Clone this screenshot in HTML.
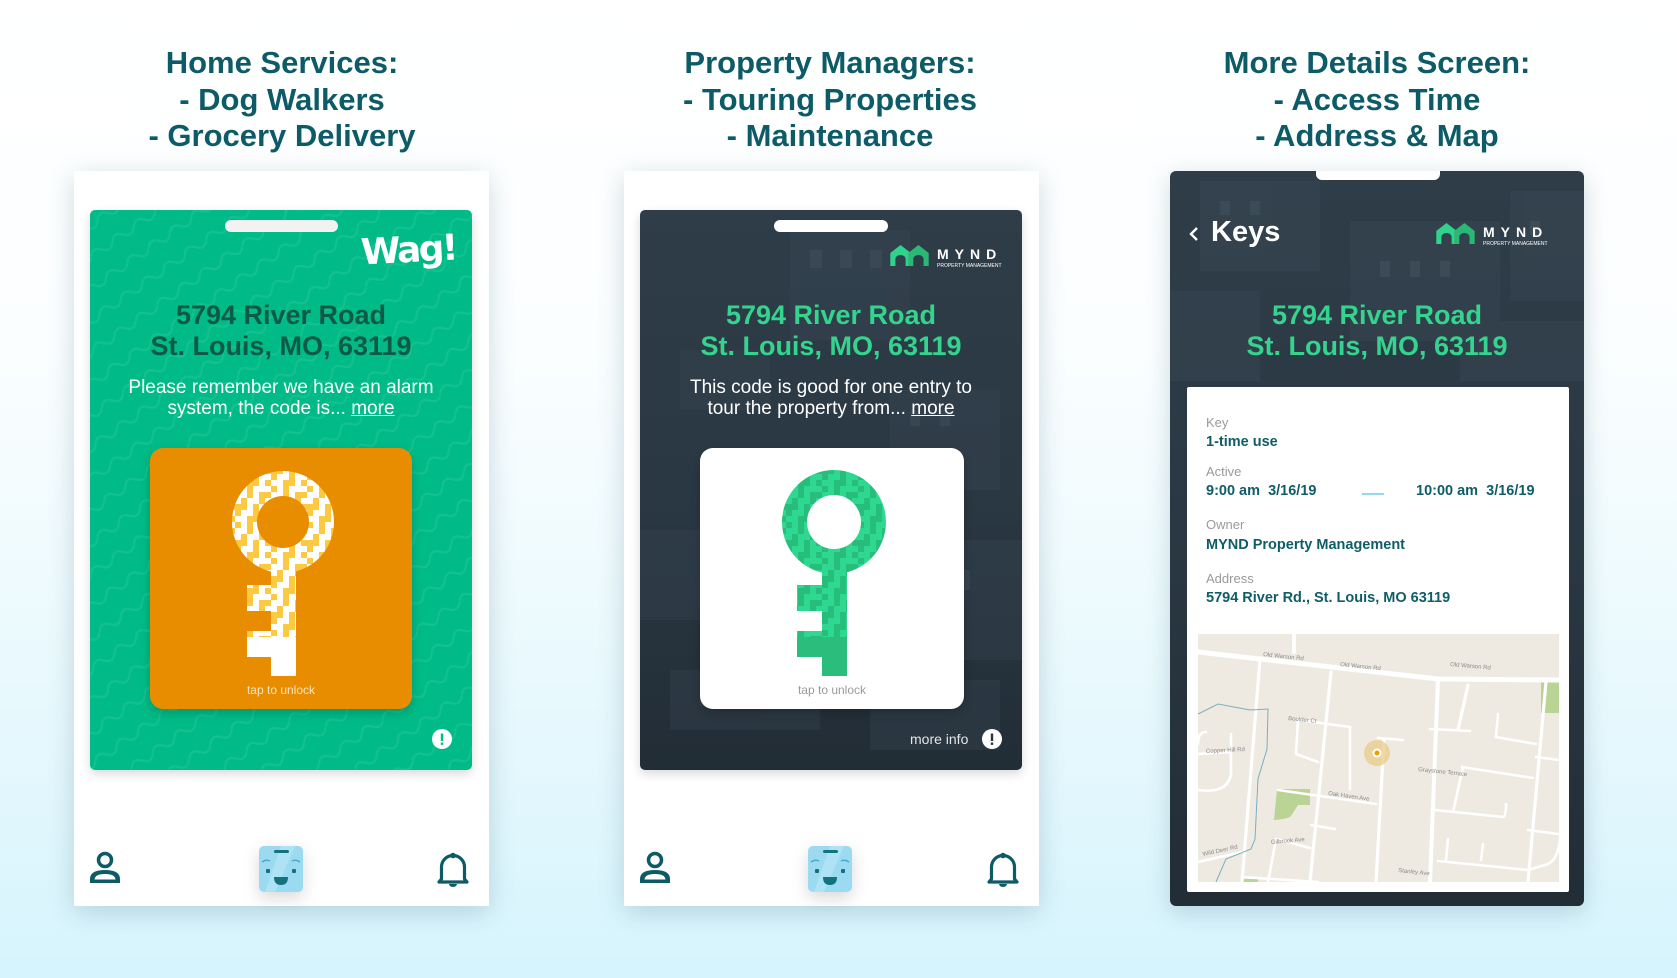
<!DOCTYPE html>
<html><head><meta charset="utf-8">
<style>
*{margin:0;padding:0;box-sizing:border-box}
body{width:1677px;height:978px;overflow:hidden;position:relative;font-family:"Liberation Sans",sans-serif;background:linear-gradient(#ffffff 0%,#fbfeff 35%,#e6f8fd 75%,#d6f4fd 100%)}
.abs{position:absolute}
.title{position:absolute;width:500px;text-align:center;color:#0d5b67;font-weight:bold;font-size:31px;line-height:36.5px;top:45px}
.phone{position:absolute;top:171px;width:415px;height:735px;background:#fff;box-shadow:0 6px 24px rgba(40,90,110,.22)}
.addr{position:absolute;width:382px;text-align:center;font-weight:bold;font-size:27px;line-height:31px;top:300px}
.body{position:absolute;width:382px;text-align:center;color:#fff;font-size:19px;line-height:21px;top:377px}
.body u{text-decoration:underline}
.pill{position:absolute;height:12px;border-radius:6px;background:#f2f2f2}
.tap{position:absolute;width:100%;text-align:center;font-size:12px;bottom:12px}
.lbl{position:absolute;left:1206px;font-size:13px;color:#9a9a9a}
.val{position:absolute;font-size:14.5px;font-weight:bold;color:#0f5d68}
</style></head><body>

<div class="title" style="left:32px">Home Services:<br>- Dog Walkers<br>- Grocery Delivery</div>
<div class="title" style="left:580px">Property Managers:<br>- Touring Properties<br>- Maintenance</div>
<div class="title" style="left:1127px">More Details Screen:<br>- Access Time<br>- Address &amp; Map</div>

<svg width="0" height="0" style="position:absolute">
<defs>
<pattern id="wave" width="26" height="26" patternUnits="userSpaceOnUse" patternTransform="rotate(-35)">
<path d="M0 13 Q6.5 5 13 13 T26 13" fill="none" stroke="rgba(255,255,255,0.08)" stroke-width="2.2"/>
</pattern>
<pattern id="qrY" width="36" height="36" patternUnits="userSpaceOnUse">
<rect width="36" height="36" fill="#ffffff"/>
<g fill="#fdc940"><rect x="0" y="0" width="6" height="12"/><rect x="12" y="6" width="12" height="6"/><rect x="24" y="0" width="6" height="6"/><rect x="6" y="18" width="6" height="12"/><rect x="18" y="18" width="12" height="6"/><rect x="30" y="12" width="6" height="12"/><rect x="0" y="30" width="12" height="6"/><rect x="18" y="30" width="6" height="6"/><rect x="24" y="24" width="6" height="6"/><rect x="12" y="12" width="6" height="6"/></g>
</pattern>
<pattern id="qrG" width="36" height="36" patternUnits="userSpaceOnUse">
<rect width="36" height="36" fill="#2fd891"/>
<g fill="#27bd7b"><rect x="0" y="0" width="6" height="12"/><rect x="12" y="6" width="12" height="6"/><rect x="24" y="0" width="6" height="6"/><rect x="6" y="18" width="6" height="12"/><rect x="18" y="18" width="12" height="6"/><rect x="30" y="12" width="6" height="12"/><rect x="0" y="30" width="12" height="6"/><rect x="18" y="30" width="6" height="6"/><rect x="24" y="24" width="6" height="6"/><rect x="12" y="12" width="6" height="6"/></g>
</pattern>
<linearGradient id="dark" x1="0" y1="0" x2="0" y2="1"><stop offset="0" stop-color="#2f3d49"/><stop offset="0.5" stop-color="#2a3843"/><stop offset="1" stop-color="#222d36"/></linearGradient>
</defs>
</svg>

<!-- PHONE 1 -->
<div class="phone" style="left:74px"></div>
<div class="abs" style="left:90px;top:210px;width:382px;height:560px;border-radius:5px;background:#00bb87;overflow:hidden;box-shadow:0 4px 10px rgba(0,0,0,.15)">
<svg width="382" height="560" style="position:absolute;left:0;top:0"><rect width="382" height="560" fill="url(#wave)"/></svg>
</div>
<div class="pill" style="left:225px;top:220px;width:113px"></div>
<div class="abs" style="left:361px;top:230px;font-size:36px;font-weight:900;color:#fff;font-family:'DejaVu Sans','Liberation Sans',sans-serif;letter-spacing:-2.5px;transform:rotate(-3deg)">Wag!</div>
<div class="addr" style="left:90px;color:#0c5a47">5794 River Road<br>St. Louis, MO, 63119</div>
<div class="body" style="left:90px">Please remember we have an alarm<br>system, the code is... <u>more</u></div>
<div class="abs" style="left:150px;top:448px;width:262px;height:261px;border-radius:13px;background:#e88d00;box-shadow:0 4px 10px rgba(0,0,0,.2)">
<div class="tap" style="color:#fbe3c0">tap to unlock</div></div>
<svg class="abs" style="left:150px;top:448px" width="262" height="261">
<g transform="translate(133,74)">
<clipPath id="k1"><circle cx="0" cy="0" r="51"/><rect x="-12" y="30" width="25" height="124"/><rect x="-36" y="63" width="25" height="26"/><rect x="-36" y="109" width="25" height="26"/></clipPath>
<rect x="-60" y="-60" width="120" height="220" fill="url(#qrY)" clip-path="url(#k1)"/>
<rect x="-36" y="115" width="49" height="20" fill="#fff"/><rect x="-12" y="135" width="25" height="19" fill="#fff"/>
<circle cx="0" cy="0" r="26" fill="#e88d00"/>
</g></svg>
<svg class="abs" style="left:432px;top:729px" width="20" height="20"><circle cx="10" cy="10" r="10" fill="#fff"/><rect x="8.8" y="4.5" width="2.4" height="7.5" fill="#00bb87"/><rect x="8.8" y="13.5" width="2.4" height="2.4" fill="#00bb87"/></svg>

<!-- PHONE 2 -->
<div class="phone" style="left:624px"></div>
<div class="abs" style="left:640px;top:210px;width:382px;height:560px;border-radius:5px;overflow:hidden;box-shadow:0 4px 10px rgba(0,0,0,.15)">
<svg width="382" height="560" style="position:absolute;left:0;top:0">
<rect width="382" height="560" fill="url(#dark)"/>
<g fill="#3a4a57" opacity="0.3">
<rect x="150" y="20" width="120" height="110"/><rect x="40" y="140" width="90" height="60"/><rect x="250" y="180" width="110" height="100"/><rect x="0" y="320" width="80" height="90"/><rect x="300" y="330" width="82" height="120"/><rect x="30" y="460" width="150" height="60"/><rect x="230" y="470" width="130" height="70"/>
</g>
<g fill="#4d5d69" opacity="0.3"><rect x="170" y="40" width="12" height="18"/><rect x="200" y="40" width="12" height="18"/><rect x="230" y="40" width="12" height="18"/><rect x="270" y="200" width="10" height="16"/><rect x="300" y="200" width="10" height="16"/><rect x="320" y="360" width="10" height="20"/><rect x="60" y="480" width="10" height="16"/><rect x="90" y="480" width="10" height="16"/></g>
</svg>
</div>
<div class="pill" style="left:774px;top:220px;width:114px;background:#fff"></div>
<svg class="abs" style="left:889px;top:244px" width="120" height="28">
<g transform="scale(1.28,1)">
<path d="M1 22 V9 L9 1 L17 9 V22 H13 V15 A4 4 0 0 0 5 15 V22 Z" fill="#31d38c"/>
<path d="M15 22 V9 L23 1 L31 9 V22 H27 V15 A4 4 0 0 0 19 15 V22 Z" fill="#2bb877"/></g>
<text x="48" y="15" font-size="14" font-weight="bold" fill="#fff" letter-spacing="6" font-family="Liberation Sans">MYND</text>
<text x="48" y="23" font-size="5" fill="#fff" font-family="Liberation Sans">PROPERTY MANAGEMENT</text>
</svg>
<div class="addr" style="left:640px;color:#34d48e">5794 River Road<br>St. Louis, MO, 63119</div>
<div class="body" style="left:640px">This code is good for one entry to<br>tour the property from... <u>more</u></div>
<div class="abs" style="left:700px;top:448px;width:264px;height:261px;border-radius:13px;background:#fff;box-shadow:0 4px 10px rgba(0,0,0,.2)">
<div class="tap" style="color:#9a9a9a">tap to unlock</div></div>
<svg class="abs" style="left:700px;top:448px" width="264" height="261">
<g transform="translate(134,74)">
<clipPath id="k2"><circle cx="0" cy="0" r="52"/><rect x="-12" y="30" width="25" height="124"/><rect x="-37" y="63" width="25" height="26"/><rect x="-37" y="109" width="25" height="26"/></clipPath>
<rect x="-60" y="-60" width="120" height="220" fill="url(#qrG)" clip-path="url(#k2)"/>
<rect x="-37" y="115" width="50" height="20" fill="#2bbd7b"/><rect x="-12" y="135" width="25" height="19" fill="#2bbd7b"/>
<circle cx="0" cy="0" r="27" fill="#fff"/>
</g></svg>
<div class="abs" style="left:910px;top:731px;font-size:14px;color:#e6e6e6">more info</div>
<svg class="abs" style="left:982px;top:729px" width="20" height="20"><circle cx="10" cy="10" r="10" fill="#fff"/><rect x="8.8" y="4.5" width="2.4" height="7.5" fill="#27343f"/><rect x="8.8" y="13.5" width="2.4" height="2.4" fill="#27343f"/></svg>

<!-- nav icons -->
<svg class="abs" style="left:88px;top:851px" width="36" height="34"><circle cx="17" cy="9" r="6.5" fill="none" stroke="#0d5b67" stroke-width="3.5"/><path d="M2 32 V28 Q2 19 17 19 Q32 19 32 28 V32 Z M6.5 28.5 H27.5 Q27 23 17 23 Q7 23 6.5 28.5Z" fill="#0d5b67" fill-rule="evenodd"/></svg>
<svg class="abs" style="left:638px;top:851px" width="36" height="34"><circle cx="17" cy="9" r="6.5" fill="none" stroke="#0d5b67" stroke-width="3.5"/><path d="M2 32 V28 Q2 19 17 19 Q32 19 32 28 V32 Z M6.5 28.5 H27.5 Q27 23 17 23 Q7 23 6.5 28.5Z" fill="#0d5b67" fill-rule="evenodd"/></svg>
<svg class="abs" style="left:436px;top:852px" width="34" height="36"><circle cx="17" cy="3.5" r="2.8" fill="#0d5b67"/><path d="M5.5 27 V15 A11.5 11.5 0 0 1 28.5 15 V27 L31 30 H3 Z" fill="none" stroke="#0d5b67" stroke-width="3.2" stroke-linejoin="round"/><path d="M13 32 A4 3 0 0 0 21 32 Z" fill="#0d5b67"/></svg>
<svg class="abs" style="left:986px;top:852px" width="34" height="36"><circle cx="17" cy="3.5" r="2.8" fill="#0d5b67"/><path d="M5.5 27 V15 A11.5 11.5 0 0 1 28.5 15 V27 L31 30 H3 Z" fill="none" stroke="#0d5b67" stroke-width="3.2" stroke-linejoin="round"/><path d="M13 32 A4 3 0 0 0 21 32 Z" fill="#0d5b67"/></svg>
<svg class="abs" style="left:259px;top:846px;filter:drop-shadow(0 6px 8px rgba(0,0,0,.15))" width="45" height="47"><rect width="44" height="46" rx="5" fill="#9bdaf0"/><path d="M22 0 L36 0 L16 46 L6 46Z" fill="#b6e6f6" opacity=".7"/><rect x="15" y="4" width="15" height="3" rx="1.5" fill="#14727f"/><path d="M3 16 Q7 13 11 15 M33 15 Q37 13 41 16" stroke="#4aaac3" stroke-width="1.5" fill="none"/><rect x="7" y="23" width="4" height="4" rx="1" fill="#14727f"/><rect x="33" y="23" width="4" height="4" rx="1" fill="#14727f"/><path d="M15 31 H29 Q29 39 22 39 Q15 39 15 31Z" fill="#14727f"/></svg>
<svg class="abs" style="left:808px;top:846px;filter:drop-shadow(0 6px 8px rgba(0,0,0,.15))" width="45" height="47"><rect width="44" height="46" rx="5" fill="#9bdaf0"/><path d="M22 0 L36 0 L16 46 L6 46Z" fill="#b6e6f6" opacity=".7"/><rect x="15" y="4" width="15" height="3" rx="1.5" fill="#14727f"/><path d="M3 16 Q7 13 11 15 M33 15 Q37 13 41 16" stroke="#4aaac3" stroke-width="1.5" fill="none"/><rect x="7" y="23" width="4" height="4" rx="1" fill="#14727f"/><rect x="33" y="23" width="4" height="4" rx="1" fill="#14727f"/><path d="M15 31 H29 Q29 39 22 39 Q15 39 15 31Z" fill="#14727f"/></svg>

<!-- PHONE 3 -->
<div class="abs" style="left:1170px;top:171px;width:414px;height:735px;border-radius:6px;overflow:hidden;box-shadow:0 6px 24px rgba(40,90,110,.22)">
<svg width="414" height="735" style="position:absolute;left:0;top:0">
<rect width="414" height="735" fill="url(#dark)"/>
<g fill="#3d4c59" opacity="0.35"><rect x="30" y="10" width="120" height="90"/><rect x="180" y="50" width="150" height="120"/><rect x="340" y="20" width="74" height="110"/><rect x="0" y="120" width="90" height="90"/><rect x="290" y="150" width="124" height="60"/></g>
<g fill="#55636f" opacity="0.3"><rect x="50" y="30" width="10" height="14"/><rect x="80" y="30" width="10" height="14"/><rect x="210" y="90" width="10" height="16"/><rect x="240" y="90" width="10" height="16"/><rect x="270" y="90" width="10" height="16"/><rect x="360" y="50" width="10" height="14"/></g>
</svg>
</div>
<div class="abs" style="left:1316px;top:171px;width:124px;height:9px;background:#fff;border-radius:0 0 6px 6px"></div>
<svg class="abs" style="left:1188px;top:226px" width="12" height="16"><path d="M9 2 L3 8 L9 14" fill="none" stroke="#fff" stroke-width="2.4"/></svg>
<div class="abs" style="left:1211px;top:216px;font-size:29px;font-weight:bold;color:#fff">Keys</div>
<svg class="abs" style="left:1435px;top:222px" width="120" height="28">
<g transform="scale(1.28,1)">
<path d="M1 22 V9 L9 1 L17 9 V22 H13 V15 A4 4 0 0 0 5 15 V22 Z" fill="#31d38c"/>
<path d="M15 22 V9 L23 1 L31 9 V22 H27 V15 A4 4 0 0 0 19 15 V22 Z" fill="#2bb877"/></g>
<text x="48" y="15" font-size="14" font-weight="bold" fill="#fff" letter-spacing="6" font-family="Liberation Sans">MYND</text>
<text x="48" y="23" font-size="5" fill="#fff" font-family="Liberation Sans">PROPERTY MANAGEMENT</text>
</svg>
<div class="addr" style="left:1186px;color:#34d48e">5794 River Road<br>St. Louis, MO, 63119</div>
<div class="abs" style="left:1187px;top:387px;width:382px;height:505px;background:#fff;border-radius:2px"></div>
<div class="lbl" style="top:415px">Key</div>
<div class="val" style="left:1206px;top:434px">1-time use</div>
<div class="lbl" style="top:464px">Active</div>
<div class="val" style="left:1206px;top:483px">9:00 am&nbsp; 3/16/19</div>
<div class="abs" style="left:1362px;top:493px;width:22px;height:2px;background:#8fdcf0"></div>
<div class="val" style="left:1416px;top:483px">10:00 am&nbsp; 3/16/19</div>
<div class="lbl" style="top:517px">Owner</div>
<div class="val" style="left:1206px;top:537px">MYND Property Management</div>
<div class="lbl" style="top:571px">Address</div>
<div class="val" style="left:1206px;top:590px">5794 River Rd., St. Louis, MO 63119</div>

<svg class="abs" style="left:1198px;top:634px" width="361" height="248" viewBox="0 0 361 248">
<rect width="361" height="248" fill="#eeeae2"/>
<g fill="#b9d495"><path d="M343 46 H361 V79 H343Z"/><path d="M79 155 H112 V171 H100 L93 182 Q90 185 76 186Z"/><path d="M43 245 H60 V248 H43Z"/></g>
<g stroke="#fff" fill="none" stroke-linecap="round">
<path d="M0 18 L240 45 L361 46" stroke-width="5"/>
<path d="M240 45 L232 248 M96 0 L96 18" stroke-width="4"/>
<path d="M62 25 L44 248 M133 38 L112 248 M186 105 L178 248 M348 48 L330 248 M270 51 L260 96" stroke-width="3.2"/>
<path d="M0 156 Q30 160 33 140 L33 100 M8 98 Q0 98 0 110 M0 120 L32 118 M100 86 L152 93 L152 155 M100 86 L98 120 L120 128 M180 104 L205 106 M80 156 L178 170 M113 191 L137 195 M78 205 L70 248 M78 205 L112 214 M232 95 L272 97 M300 80 L298 103 L338 110 M264 133 L335 144 M265 133 L255 178 M237 176 L305 183 Q308 183 308 170 M240 227 L330 236 L350 230 Q360 225 362 205 M330 196 L360 200 M338 123 L361 126 M285 210 L283 226 M250 205 L248 226 M0 228 L44 218 M44 243 L120 248" stroke-width="2.6"/>
</g>
<path d="M0 80 L20 70 L52 76 L70 75 L69 115 L60 145 L57 205 L53 215 L28 225 L18 248" fill="none" stroke="#7aaec0" stroke-width="1"/>
<circle cx="179" cy="119" r="13" fill="#e9cb85" opacity=".75"/>
<circle cx="179" cy="119" r="4.5" fill="#fff"/><circle cx="179" cy="119" r="2.5" fill="#e8a300"/>
<g font-size="6" fill="#8a8a8a" font-family="Liberation Sans">
<text x="65" y="22" transform="rotate(6 65 22)">Old Warson Rd</text>
<text x="142" y="32" transform="rotate(6 142 32)">Old Warson Rd</text>
<text x="252" y="32" transform="rotate(5 252 32)">Old Warson Rd</text>
<text x="90" y="86" transform="rotate(6 90 86)">Boulder Ct</text>
<text x="8" y="119" transform="rotate(-3 8 119)">Copper Hill Rd</text>
<text x="220" y="137" transform="rotate(6 220 137)">Graystone Terrace</text>
<text x="130" y="161" transform="rotate(8 130 161)">Oak Haven Ave</text>
<text x="73" y="210" transform="rotate(-5 73 210)">Gilbrook Ave</text>
<text x="200" y="238" transform="rotate(6 200 238)">Stanley Ave</text>
<text x="5" y="222" transform="rotate(-12 5 222)">Wild Deer Rd</text>
</g>
</svg>
</body></html>
